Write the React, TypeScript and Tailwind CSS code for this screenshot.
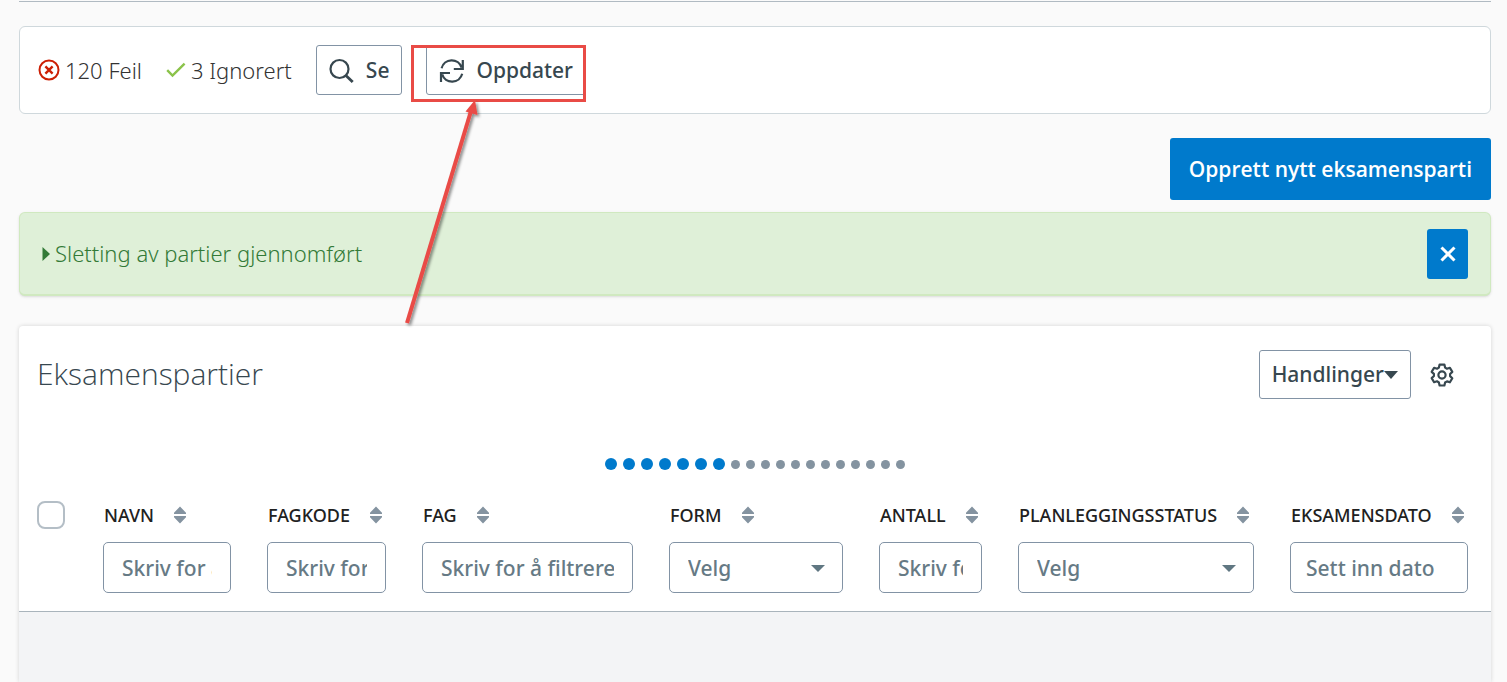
import type { ReactNode } from "react";

type Column = {
  id: string;
  title: string;
  width: string;
  kind: "text" | "select" | "date";
};

const columns: Column[] = [
  { id: "navn", title: "NAVN", width: "w-[164px]", kind: "text" },
  { id: "fagkode", title: "FAGKODE", width: "w-[155px]", kind: "text" },
  { id: "fag", title: "FAG", width: "w-[247px]", kind: "text" },
  { id: "form", title: "FORM", width: "w-[210px]", kind: "select" },
  { id: "antall", title: "ANTALL", width: "w-[139px]", kind: "text" },
  { id: "status", title: "PLANLEGGINGSSTATUS", width: "w-[272px]", kind: "select" },
  { id: "dato", title: "EKSAMENSDATO", width: "w-[219px]", kind: "date" },
];

function ErrorIcon() {
  return (
    <svg width="22" height="22" viewBox="0 0 22 22" fill="none" stroke="#cc1f04" aria-hidden="true">
      <circle cx="11" cy="11" r="9.5" strokeWidth="2" />
      <path d="M7.4 7.4l7.2 7.2M14.6 7.4l-7.2 7.2" strokeWidth="2.4" />
    </svg>
  );
}

function CheckIcon() {
  return (
    <svg width="20" height="16" viewBox="0 0 20 16" fill="none" stroke="#8bc34a" strokeWidth="2.4" aria-hidden="true">
      <path d="M1.2 8.2l5.3 5.3L18.6 1.6" />
    </svg>
  );
}

function SearchIcon() {
  return (
    <svg width="26" height="26" viewBox="0 0 26 26" fill="none" stroke="#37474f" aria-hidden="true">
      <circle cx="10.5" cy="11" r="9" strokeWidth="2.2" />
      <path d="M16.9 17.4l6.800 6.600" strokeWidth="2.8" />
    </svg>
  );
}

function RefreshIcon() {
  return (
    <svg width="26" height="26" viewBox="0 0 26 26" fill="none" stroke="#37474f" strokeWidth="2.2" aria-hidden="true">
      <path d="M2.600 10.200A10.400 10.400 0 0 1 22.600 9.600M23.800 2v9h-9" />
      <path d="M23.200 15.800A10.400 10.400 0 0 1 3.200 16.400M2 24v-9h9" />
    </svg>
  );
}

function GearIcon() {
  return (
    <svg width="24" height="24" viewBox="0 0 24 24" fill="none" stroke="#37474f" strokeWidth="2.2" strokeLinejoin="round" aria-hidden="true">
      <path d="M9.600 1.600h4.800l.7 3 1.900 1.100 2.900-.9 2.400 4.100-2.200 2.100v2.100l2.200 2.100-2.400 4.100-2.900-.9-1.900 1.100-.7 3H9.600l-.7-3L7 18.300l-2.900.9-2.400-4.100 2.200-2.100v-2.100L1.700 8.900l2.400-4.100 2.900.9 1.900-1.100z" />
      <circle cx="12" cy="12" r="3.600" />
    </svg>
  );
}

function SortIcon() {
  return (
    <svg width="12" height="18" viewBox="0 0 12 18" fill="#8493a0" aria-hidden="true">
      <path d="M6 .5L12 6.800V8H0V6.800zM6 17.500L12 11.200V10H0v1.200z" />
    </svg>
  );
}

function Caret({ className }: { className: string }) {
  return (
    <svg className={className} viewBox="0 0 14 8" preserveAspectRatio="none" fill="currentColor" aria-hidden="true">
      <path d="M0 0h14L7 8z" />
    </svg>
  );
}

function OutlineButton({ children, className }: { children: ReactNode; className: string }) {
  return (
    <button
      type="button"
      className={`flex items-center rounded-[3px] border border-[#8293a5] bg-white text-[21px] font-medium text-[#37474f] ${className}`}
    >
      {children}
    </button>
  );
}

function Callout() {
  return (
    <div className="pointer-events-none absolute -left-[15px] top-0 z-10 h-[57px] w-[175px] border-3 border-[#e94b46]">
      <svg className="absolute -left-3 top-[51px]" width="80" height="230" viewBox="0 0 80 230" aria-hidden="true">
        <defs>
          <filter id="arrow-shadow" x="-20%" y="-10%" width="150%" height="120%">
            <feDropShadow dx="2" dy="2" stdDeviation="1.5" floodOpacity="0.45" />
          </filter>
        </defs>
        <g filter="url(#arrow-shadow)">
          <path d="M5 224L69 12" stroke="#e94b46" strokeWidth="4" />
          <path d="M73 1L63.500 12.500L75.500 16z" fill="#e94b46" />
        </g>
      </svg>
    </div>
  );
}

function Filter({ column }: { column: Column }) {
  const label = `Filter ${column.title}`;
  const box =
    "block h-[51px] w-full rounded-[5px] border border-[#8293a5] bg-white text-[21px] font-medium text-[#667a85] placeholder:text-[#667a85] placeholder:opacity-100";
  if (column.kind === "select") {
    return (
      <div className="relative">
        <select aria-label={label} className={`${box} appearance-none px-[18px] pt-0.5`}>
          <option>Velg</option>
        </select>
        <Caret className="pointer-events-none absolute right-[18px] top-[23px] h-[7px] w-[14px] text-[#607782]" />
      </div>
    );
  }
  if (column.kind === "date") {
    return <input type="text" aria-label={label} placeholder="Sett inn dato" className={`${box} px-[15px]`} />;
  }
  return <input type="text" aria-label={label} placeholder="Skriv for å filtrere" className={`${box} px-[18px]`} />;
}

export default function App() {
  return (
    <div className="flex min-h-screen flex-col bg-[#fafafa] pl-[19px] pr-4 pt-px font-['Noto_Sans',sans-serif] text-[#37474f]">
      <hr className="border-t border-[#b0bac2]" />

      <section className="mt-6 flex h-[88px] items-center rounded-md border border-[#cfd8dc] bg-white pl-[18px]">
        <div className="flex items-center gap-[5px] text-[22px] font-light text-[#333]">
          <ErrorIcon />
          <span>120 Feil</span>
        </div>
        <div className="ml-6 flex items-center gap-[5px] text-[22px] font-light text-[#333]">
          <CheckIcon />
          <span>3 Ignorert</span>
        </div>
        <OutlineButton className="ml-6 h-[50px] gap-[11px] px-3 pt-0.5">
          <SearchIcon />
          Se
        </OutlineButton>
        <div className="relative ml-6">
          <OutlineButton className="h-[50px] gap-[11px] px-3 pt-0.5">
            <RefreshIcon />
            Oppdater
          </OutlineButton>
          <Callout />
        </div>
      </section>

      <button
        type="button"
        className="mt-6 h-[62px] self-end rounded-[3px] bg-[#007acc] px-[19px] pt-0.5 font-['Open_Sans','Noto_Sans',sans-serif] text-[21px] font-semibold text-white"
      >
        Opprett nytt eksamensparti
      </button>

      <section className="mt-3 flex h-[84px] items-center justify-between rounded-md border border-b-2 border-[#d0e9c0] bg-[#dff0d8] px-[22px] shadow-sm">
        <div className="flex items-center gap-[5px] text-[22px] font-light text-[#337a37]">
          <svg width="8" height="14" viewBox="0 0 8 14" fill="currentColor" aria-hidden="true">
            <path d="M.5 0L8 7L.5 14z" />
          </svg>
          <span>Sletting av partier gjennomført</span>
        </div>
        <button
          type="button"
          aria-label="Lukk"
          className="flex h-[50px] w-[41px] items-center justify-center rounded-[3px] bg-[#007acc]"
        >
          <svg width="16" height="16" viewBox="0 0 16 16" stroke="#fff" strokeWidth="3" aria-hidden="true">
            <path d="M1.500 1.500l13 13M14.500 1.500l-13 13" />
          </svg>
        </button>
      </section>

      <section className="mt-[30px] flex grow flex-col rounded-t bg-white shadow-[0_0_4px_rgba(0,0,0,0.16)]">
        <header className="flex items-start justify-between pl-[18px] pr-[37px] pt-6">
          <h1 className="font-['Open_Sans','Noto_Sans',sans-serif] text-[30px] font-light leading-[48px]">Eksamenspartier</h1>
          <div className="flex items-center gap-[19px]">
            <OutlineButton className="h-[49px] px-3">
              Handlinger
              <Caret className="h-[8px] w-[14px]" />
            </OutlineButton>
            <button type="button" aria-label="Innstillinger">
              <GearIcon />
            </button>
          </div>
        </header>

        <div className="mt-[59px] flex h-3 items-center justify-center gap-1.5" role="progressbar" aria-label="Laster" aria-valuenow={7} aria-valuemax={19}>
          {Array.from({ length: 19 }, (_, i) => (
            <span key={i} className={i < 7 ? "size-3 rounded-full bg-[#007acc]" : "size-[9px] rounded-full bg-[#8493a0]"} />
          ))}
        </div>

        <table className="mt-[30px] w-full table-fixed border-b border-[#a9b4bc]">
          <thead>
            <tr className="h-[42px]">
              <th className="w-[66px] pl-[18px] text-left align-top">
                <input
                  type="checkbox"
                  aria-label="Velg alle"
                  className="mt-px block size-7 appearance-none rounded-lg border-2 border-[#b4bec6] bg-white"
                />
              </th>
              {columns.map((column) => (
                <th key={column.id} className={`${column.width} whitespace-nowrap px-[18px] text-left align-top`}>
                  <button type="button" className="flex h-[30px] items-center gap-5 pl-px text-[18px] font-medium text-[#212121]">
                    {column.title}
                    <SortIcon />
                  </button>
                </th>
              ))}
            </tr>
          </thead>
          <tbody>
            <tr>
              <td />
              {columns.map((column) => (
                <td key={column.id} className="px-[18px] pb-[18px] align-top last:pr-[23px]">
                  <Filter column={column} />
                </td>
              ))}
            </tr>
          </tbody>
        </table>
        <div className="grow bg-[#f3f4f6]" />
      </section>
    </div>
  );
}
